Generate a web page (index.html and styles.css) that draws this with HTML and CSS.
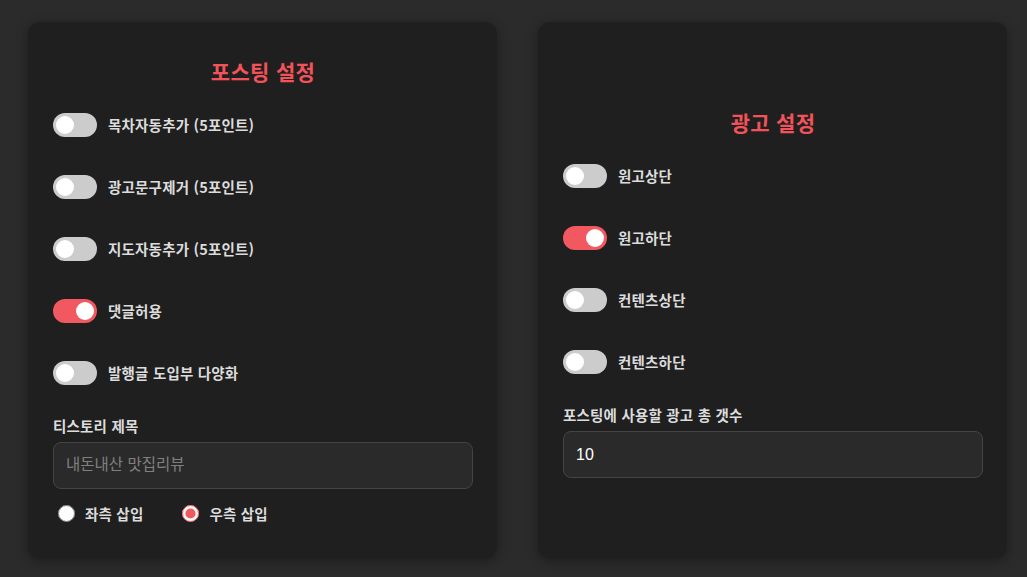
FILE: index.html
```html
<!DOCTYPE html>
<html lang="ko">
<head>
  <meta charset="UTF-8" />
  <meta name="viewport" content="width=device-width, initial-scale=1.0" />
  <title>포스팅 / 광고 설정</title>
  <link rel="stylesheet" href="styles.css">
</head>
<body>

  <div class="wrap">
    <!-- 포스팅 설정 -->
    <section class="card">
      <h2 class="card-title">포스팅 설정</h2>

      <div class="toggle-list">
        <label class="toggle-row">
          <input type="checkbox" class="toggle-input" />
          <span class="switch"></span>
          <span class="toggle-text">목차자동추가 (5포인트)</span>
        </label>
        <label class="toggle-row">
          <input type="checkbox" class="toggle-input" />
          <span class="switch"></span>
          <span class="toggle-text">광고문구제거 (5포인트)</span>
        </label>
        <label class="toggle-row">
          <input type="checkbox" class="toggle-input" />
          <span class="switch"></span>
          <span class="toggle-text">지도자동추가 (5포인트)</span>
        </label>
        <label class="toggle-row">
          <input type="checkbox" class="toggle-input" checked />
          <span class="switch"></span>
          <span class="toggle-text">댓글허용</span>
        </label>
        <label class="toggle-row">
          <input type="checkbox" class="toggle-input" />
          <span class="switch"></span>
          <span class="toggle-text">발행글 도입부 다양화</span>
        </label>
      </div>

      <div class="field">
        <label class="field-label" for="blogTitle">티스토리 제목</label>
        <input type="text" id="blogTitle" class="text-input" placeholder="내돈내산 맛집리뷰" />
      </div>

      <div class="radio-group">
        <label class="radio-row">
          <input type="radio" name="insertPos" value="left" />
          <span>좌측 삽입</span>
        </label>
        <label class="radio-row">
          <input type="radio" name="insertPos" value="right" checked />
          <span>우측 삽입</span>
        </label>
      </div>
    </section>

    <!-- 광고 설정 -->
    <section class="card card-ads">
      <h2 class="card-title">광고 설정</h2>

      <div class="toggle-list">
        <label class="toggle-row">
          <input type="checkbox" class="toggle-input" />
          <span class="switch"></span>
          <span class="toggle-text">원고상단</span>
        </label>
        <label class="toggle-row">
          <input type="checkbox" class="toggle-input" checked />
          <span class="switch"></span>
          <span class="toggle-text">원고하단</span>
        </label>
        <label class="toggle-row">
          <input type="checkbox" class="toggle-input" />
          <span class="switch"></span>
          <span class="toggle-text">컨텐츠상단</span>
        </label>
        <label class="toggle-row">
          <input type="checkbox" class="toggle-input" />
          <span class="switch"></span>
          <span class="toggle-text">컨텐츠하단</span>
        </label>
      </div>

      <div class="field">
        <label class="field-label" for="adCount">포스팅에 사용할 광고 총 갯수</label>
        <input type="number" id="adCount" class="text-input" value="10" />
      </div>
    </section>
  </div>

</body>
</html>
```

FILE: styles.css
```css
* {
  box-sizing: border-box;
}
body {
  margin: 0;
  background: #2b2b2b;
  color: #dcdcdc;
  font-family: "Noto Sans CJK KR", "Noto Sans", sans-serif;
}
.wrap {
  display: flex;
  gap: 41px;
  padding: 22px 20px 19px 28px;
  height: 577px;
}
.card {
  flex: 1;
  background: #1f1f1f;
  border-radius: 12px;
  box-shadow: 0 3px 12px rgba(0,0,0,0.35);
  padding: 0 24px 0 25px;
  display: flex;
  flex-direction: column;
  justify-content: center;
}
.card-ads {
  padding-top: 6px;
}
.card-title {
  margin: 0 0 28px;
  text-align: center;
  font-size: 21px;
  line-height: 28px;
  font-weight: 700;
  letter-spacing: 0.3px;
  color: #f2525a;
}
.toggle-list {
  display: flex;
  flex-direction: column;
  gap: 38px;
}
.toggle-row {
  display: flex;
  align-items: center;
  gap: 11px;
  height: 24px;
  cursor: pointer;
}
.toggle-input {
  display: none;
}
.switch {
  position: relative;
  width: 44px;
  height: 24px;
  border-radius: 12px;
  background: #cccccc;
  flex-shrink: 0;
  transition: background 0.2s;
}
.switch::after {
  content: "";
  position: absolute;
  top: 3px;
  left: 3px;
  width: 18px;
  height: 18px;
  border-radius: 50%;
  background: #fff;
  transition: left 0.2s;
}
.toggle-input:checked + .switch {
  background: #f2585f;
}
.toggle-input:checked + .switch::after {
  left: 23px;
}
.toggle-text {
  font-size: 14.5px;
  line-height: 20px;
  font-weight: 700;
  letter-spacing: 0.2px;
  color: #dcdcdc;
}
.field {
  margin-top: 31px;
}
.field-label {
  display: block;
  font-size: 14.5px;
  line-height: 20px;
  font-weight: 700;
  letter-spacing: 0.2px;
  margin-bottom: 6px;
}
.text-input {
  display: block;
  width: 100%;
  height: 47px;
  padding: 0 12px;
  background: #2a2a2a;
  border: 1px solid #444;
  border-radius: 8px;
  color: #fff;
  font-family: "Liberation Sans", "Noto Sans CJK KR", sans-serif;
  font-size: 16px;
  outline: none;
}
.text-input::placeholder {
  color: #808080;
  font-family: "Noto Sans CJK KR", sans-serif;
  font-size: 15.5px;
}
.text-input::-webkit-inner-spin-button {
  -webkit-appearance: none;
}
.radio-group {
  display: flex;
  gap: 39px;
  margin-top: 15px;
  padding-left: 5px;
}
.radio-row {
  display: flex;
  align-items: center;
  gap: 10px;
  height: 20px;
  font-size: 14.5px;
  font-weight: 700;
  letter-spacing: 0.2px;
  cursor: pointer;
}
.radio-row input {
  margin: 0;
  width: 17px;
  height: 17px;
  accent-color: #f2585f;
}
```
